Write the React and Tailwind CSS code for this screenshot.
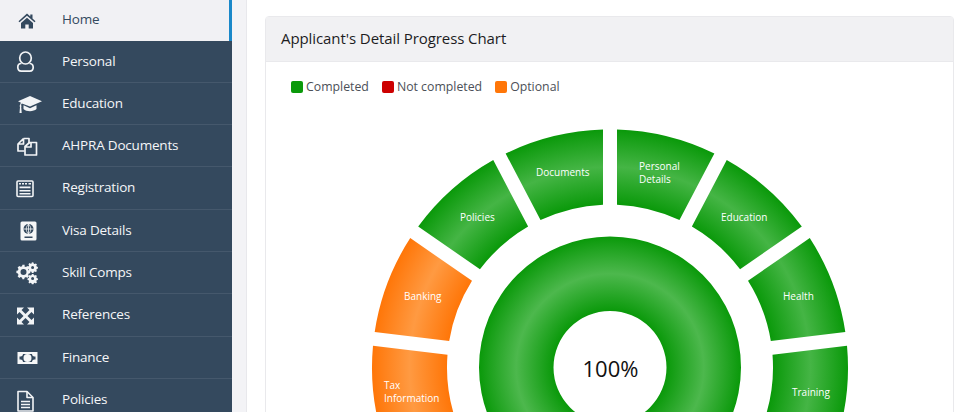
const F = { fontFamily: '"Open Sans", sans-serif' };

const CX = 610, CY = 367.5;
const rad = (d) => (d * Math.PI) / 180;
const pt = (r, a) => `${(CX + r * Math.cos(rad(a))).toFixed(2)} ${(CY - r * Math.sin(rad(a))).toFixed(2)}`;
const STEP = 360 / 13;
const R1 = 238, R0 = 163, H = 7;

function seg(a1, a2) {
  const oA = (Math.asin(H / R1) * 180) / Math.PI;
  const iA = (Math.asin(H / R0) * 180) / Math.PI;
  return `M ${pt(R1, a1 - oA)} A ${R1} ${R1} 0 0 1 ${pt(R1, a2 + oA)} L ${pt(R0, a2 + iA)} A ${R0} ${R0} 0 0 0 ${pt(R0, a1 - iA)} Z`;
}

const segments = [
  { k: 0, c: "g" },
  { k: 1, c: "g" },
  { k: 2, c: "g" },
  { k: 3, c: "g" },
  { k: -1, c: "g" },
  { k: -2, c: "g" },
  { k: -3, c: "o" },
  { k: -4, c: "o" },
];

const labels = [
  { x: 639, y: 170, t: ["Personal", "Details"] },
  { x: 721, y: 221, t: ["Education"] },
  { x: 783, y: 300, t: ["Health"] },
  { x: 792, y: 396, t: ["Training"] },
  { x: 536, y: 176, t: ["Documents"] },
  { x: 460, y: 221, t: ["Policies"] },
  { x: 404, y: 300, t: ["Banking"] },
  { x: 384, y: 389, t: ["Tax", "Information"] },
];

function Chart() {
  return (
    <svg width="960" height="412" viewBox="0 0 960 412" className="block">
      <defs>
        <radialGradient id="rg" gradientUnits="userSpaceOnUse" cx={CX} cy={CY} r={R1}>
          <stop offset={R0 / R1} stopColor="#0a990a" />
          <stop offset={(R0 + R1) / 2 / R1} stopColor="#45b545" />
          <stop offset="1" stopColor="#0a990a" />
        </radialGradient>
        <radialGradient id="ro" gradientUnits="userSpaceOnUse" cx={CX} cy={CY} r={R1}>
          <stop offset={R0 / R1} stopColor="#ff7608" />
          <stop offset={(R0 + R1) / 2 / R1} stopColor="#ff9a42" />
          <stop offset="1" stopColor="#ff7608" />
        </radialGradient>
        <radialGradient id="rd" gradientUnits="userSpaceOnUse" cx={CX} cy={CY} r="131">
          <stop offset={56.5 / 131} stopColor="#0a990a" />
          <stop offset={93.75 / 131} stopColor="#4db84d" />
          <stop offset="1" stopColor="#0a990a" />
        </radialGradient>
      </defs>
      {segments.map((s) => {
        const a1 = 90 - s.k * STEP;
        const a2 = a1 - STEP;
        return <path key={s.k} d={seg(a1, a2)} fill={s.c === "g" ? "url(#rg)" : "url(#ro)"} />;
      })}
      <path
        fillRule="evenodd"
        fill="url(#rd)"
        d={`M ${CX - 131} ${CY} a 131 131 0 1 0 262 0 a 131 131 0 1 0 -262 0 Z M ${CX - 56.5} ${CY} a 56.5 56.5 0 1 0 113 0 a 56.5 56.5 0 1 0 -113 0 Z`}
      />
      {labels.map((l) =>
        l.t.map((line, i) => (
          <text key={line} x={l.x} y={l.y + i * 13} fill="#fff" fontSize="10" style={F}>
            {line}
          </text>
        ))
      )}
      <text x={CX + 0.5} y="377" textAnchor="middle" fill="#111" fontSize="22" style={F}>
        100%
      </text>
    </svg>
  );
}

const I = ({ children }) => (
  <svg width="24" height="24" viewBox="0 0 24 24" className="shrink-0 overflow-visible">
    {children}
  </svg>
);

const icons = {
  Home: (
    <I>
      <path transform="translate(0 2)" fill="#34495e" d="M12 4.500 3.500 12.200l1 1.100L12 6.700l7.500 6.600 1-1.100-3-2.700V5.500h-2.200v2.100L12 4.500zM6 14v5.500h4.300v-4h3.400v4H18V14l-6-5.300L6 14z" />
    </I>
  ),
  Personal: (
    <I>
      <g fill="none" stroke="#f2f4f6" strokeWidth="1.700">
        <ellipse cx="10.500" cy="9" rx="5.800" ry="6" />
        <path d="M6.500 14.500H6c-2.300 0-3.200 2-3.200 3.800 0 2.500 1.200 3.900 3.400 3.900h8.600c2.200 0 3.400-1.400 3.400-3.900 0-1.800-.9-3.800-3.200-3.800h-.5" />
      </g>
    </I>
  ),
  Education: (
    <I>
      <path fill="#f2f4f6" d="M15 5 3 10.300l3 1.400c-.5.700-.8 1.500-.9 2.400-.3.200-.5.500-.5.900 0 .3.100.6.400.8L4.500 22h2.200l-.5-6.300c.2-.2.300-.4.300-.7 0-.4-.2-.7-.5-.8.100-.7.400-1.300.9-1.800L15 15.500l12-5.300L15 5zM8.500 14.300V18c1.500 1.500 3.800 2.200 6.500 2.200s5-.8 6.500-2.200v-3.700L15 17.200l-6.500-2.900z" />
    </I>
  ),
  "AHPRA Documents": (
    <I>
      <g fill="none" stroke="#f2f4f6" strokeWidth="1.700" strokeLinejoin="round">
        <path d="M8.500 5.500h5.500v5M8.500 5.500 3 11v7h6.500M8.500 5.500V11H3" />
        <path d="M16 9.500h-1.500L10 13.500v8.500h11.500V9.500H16v4.500h-6" />
      </g>
    </I>
  ),
  Registration: (
    <I>
      <g transform="translate(-2 0.500)">
        <rect x="4" y="4.500" width="16" height="15.500" rx="1" fill="none" stroke="#f2f4f6" strokeWidth="1.600" />
        <path fill="#f2f4f6" d="M6 6.500h2v1.500H6zM9 6.500h2v1.500H9zM12 6.500h2v1.500h-2zM15.500 6.500H18v1.500h-2.500zM6.500 10h11v1.800h-11zM6.500 13.500h11v1.500h-11zM6.500 16.500h11V18h-11z" />
      </g>
    </I>
  ),
  "Visa Details": (
    <I>
      <g transform="translate(1.500 1.500)">
        <rect x="4" y="2" width="16" height="19" rx="1.500" fill="#f6f7f8" />
        <circle cx="12" cy="9.500" r="5" fill="#34495e" />
        <path stroke="#f6f7f8" strokeWidth="0.800" fill="none" d="M7 9.500h10M12 4.500v10M12 4.500c-3 3-3 7 0 10M12 4.500c3 3 3 7 0 10" />
        <rect x="8" y="17" width="8" height="1.500" fill="#34495e" />
      </g>
    </I>
  ),
  "Skill Comps": (
    <I>
      <g fill="#f2f4f6">
        <path d="M9.500 6.500 11 7l1.300-.9 1.700 1.700-.9 1.300.6 1.500 1.500.3v2.300l-1.500.3-.6 1.500.9 1.300-1.700 1.700-1.300-.9-1.500.6-.3 1.500H7.400l-.3-1.500-1.500-.6-1.300.9-1.700-1.700.9-1.300-.6-1.500L1.400 13v-2.300l1.500-.3.6-1.500-.9-1.300 1.700-1.700 1.300.9 1.500-.6.3-1.500h2.300zM8.500 9a3 3 0 1 0 0 6 3 3 0 0 0 0-6z" fillRule="evenodd" />
        <path fillRule="evenodd" d="M18.500 2.500l.3 1.200 1 .4 1-.7 1.200 1.200-.7 1 .4 1 1.200.3v1.700l-1.200.3-.4 1 .7 1-1.200 1.200-1-.7-1 .4-.3 1.200h-1.700l-.3-1.200-1-.4-1 .7-1.100-1.100.7-1-.4-1-1.200-.3V6.600l1.200-.3.4-1-.7-1 1.200-1.200 1 .7 1-.4.300-1.100zM17.600 6a1.500 1.500 0 1 0 0 3 1.500 1.500 0 0 0 0-3z" />
        <path fillRule="evenodd" d="M18.500 14l.3 1.100 1 .4 1-.6 1.200 1.200-.7 1 .4 1 1.200.3v1.600l-1.200.3-.4 1 .7 1-1.200 1.200-1-.7-1 .4-.3 1.100h-1.700l-.3-1.100-1-.4-1 .7-1.100-1.200.7-1-.4-1-1.200-.3v-1.600l1.200-.3.4-1-.6-1 1.100-1.200 1 .6 1-.4.300-1.100zM17.600 17a1.500 1.500 0 1 0 0 3 1.500 1.500 0 0 0 0-3z" />
      </g>
    </I>
  ),
  References: (
    <I>
      <path transform="translate(-1.500 2)" fill="#f2f4f6" d="M3.500 3.500h7l-2.500 2.500 4 4 4-4-2.500-2.500h7v7L18 8l-4 4 4 4 2.500-2.500v7h-7L16 18l-4-4-4 4 2.500 2.500h-7v-7L6 16l4-4-4-4-2.500 2.500z" />
    </I>
  ),
  Finance: (
    <I>
      <path transform="translate(0.500 0.500)" fillRule="evenodd" fill="#f6f7f8" d="M2 6.500h20v12H2zM7.500 8.500c0 2-1.500 2.500-3.500 2.500v3c2 0 3.500.5 3.500 2.500h9c0-2 1.500-2.500 3.500-2.500v-3c-2 0-3.500-.5-3.500-2.500zM12 8.500a4 4 0 1 1 0 8 4 4 0 0 1 0-8z" />
      <path fill="#f6f7f8" d="M11.500 10.200h2v5h-2z" />
    </I>
  ),
  Policies: (
    <I>
      <g transform="translate(0 1)" fill="none" stroke="#f2f4f6" strokeWidth="1.600" strokeLinejoin="round">
        <path d="M12 3.500H3V23h15V9.500z" />
        <path d="M12 3.500v6h6" />
        <path d="M6 13.500h9M6 16.500h9M6 19.500h9" />
      </g>
    </I>
  ),
};

const items = ["Personal", "Education", "AHPRA Documents", "Registration", "Visa Details", "Skill Comps", "References", "Finance", "Policies"];

export default function App() {
  return (
    <div className="relative flex h-[412px] w-[960px] overflow-hidden bg-white" style={F}>
      <aside className="flex h-[412px] w-[232px] shrink-0 flex-col overflow-hidden bg-[#34495e]">
        <div className="flex h-[40.500px] shrink-0 items-center gap-[23px] border-r-[3px] border-[#1a88c9] bg-[#f1f1f4] pb-[3px] pl-[15px]">
          {icons.Home}
          <span className="text-[13.500px] tracking-[-0.2px] text-[#34495e]">Home</span>
        </div>
        {items.map((n) => (
          <div key={n} className="flex h-[42.300px] shrink-0 items-center gap-[23px] border-b border-[#45586c] pb-[1px] pl-[15px]">
            {icons[n]}
            <span className="text-[13.500px] tracking-[-0.2px] text-[#f4f6f8]">{n}</span>
          </div>
        ))}
      </aside>
      <div className="w-[15px] shrink-0 border-r border-[#e8e8ec] bg-[#f3f3f6]" />
      <main className="min-w-0 flex-1 py-4 pl-[18px] pr-[6px]">
        <div className="h-[500px] rounded border border-[#e9e9ec] bg-white">
          <div className="flex h-[45px] items-center border-b border-[#e9e9ec] bg-[#f1f1f3] px-[15px] pb-[2px]">
            <h2 className="text-[15px] font-normal tracking-[-0.08px] text-[#1d1d1f]">Applicant's Detail Progress Chart</h2>
          </div>
          <div className="flex items-center pl-[25px] pt-[16px] text-[12.300px] text-[#4c5058]">
            <span className="mr-[3px] h-3 w-3 rounded-[2px] bg-[#0a990a]" />
            <span className="mr-[13px]">Completed</span>
            <span className="mr-[3px] h-3 w-3 rounded-[2px] bg-[#cc0000]" />
            <span className="mr-[13px]">Not completed</span>
            <span className="mr-[3px] h-3 w-3 rounded-[2px] bg-[#ff7608]" />
            <span>Optional</span>
          </div>
        </div>
      </main>
      <div className="pointer-events-none absolute left-0 top-0">
        <Chart />
      </div>
    </div>
  );
}
